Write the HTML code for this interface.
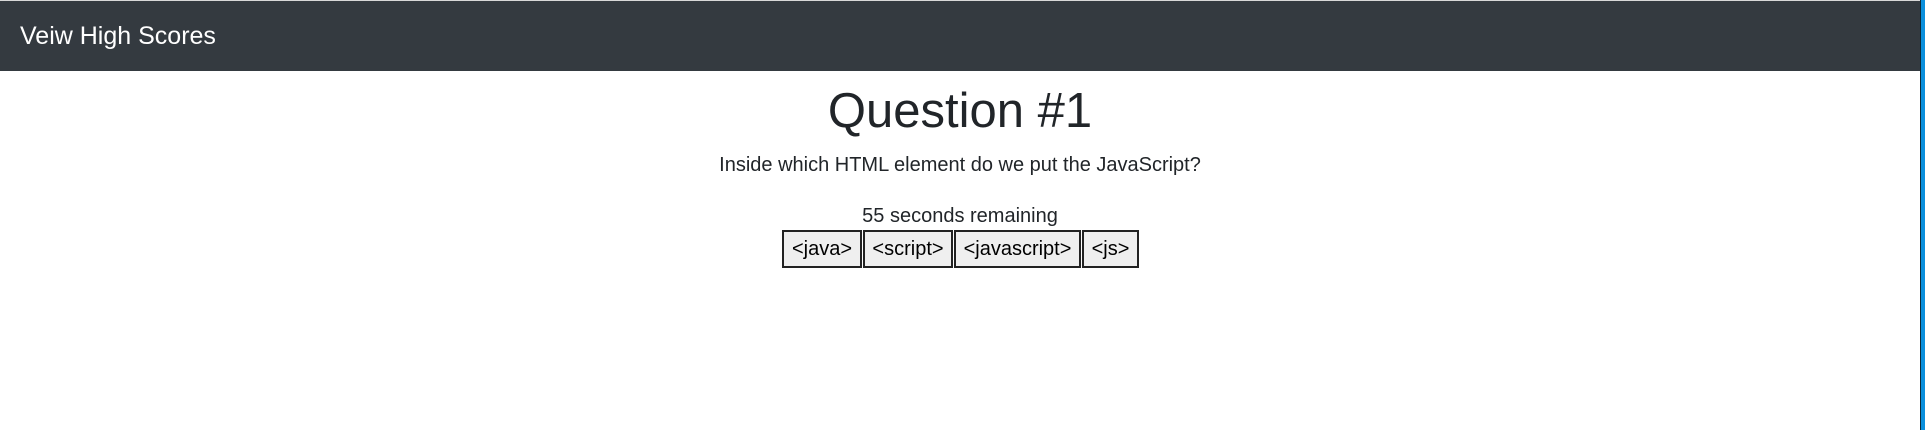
<!DOCTYPE html>
<html><head><style>
body{margin:0;width:1925px;height:430px;background:#fff;font-family:"Liberation Sans",Arial,sans-serif;color:#212529;position:relative;overflow:hidden}
.nav{position:absolute;left:0;top:1px;width:1920px;height:70px;background:#343a40}
.topline{position:absolute;left:0;top:0;width:1920px;height:1px;background:#d8d8d8}
.nav span{position:absolute;left:20px;top:21px;font-size:25px;color:#fff;line-height:28px}
.edge1{position:absolute;left:1920px;top:0;width:1px;height:430px;background:#0a2a3a}
.edge2{position:absolute;left:1921px;top:0;width:4px;height:430px;background:#0a8fdc}
.t{position:absolute;left:0;width:1920px;text-align:center;white-space:nowrap}
.btns{position:absolute;left:782px;top:230px;display:flex;gap:1px}
.btns div{border:2px solid #222;background:#efefef;font-size:20px;line-height:34px;text-align:center;color:#000;box-sizing:border-box;height:38px}
</style></head><body>
<div class="topline"></div>
<div class="nav"><span>Veiw High Scores</span></div>
<div class="edge1"></div><div class="edge2"></div>
<div class="t" style="top:81px;font-size:49px;line-height:60px;">Question #1</div>
<div class="t" style="top:153px;font-size:20px;line-height:24px;">Inside which HTML element do we put the JavaScript?</div>
<div class="t" style="top:204px;font-size:20px;line-height:24px;">55 seconds remaining</div>
<div class="btns">
<div style="width:80px">&lt;java&gt;</div>
<div style="width:90px">&lt;script&gt;</div>
<div style="width:127px">&lt;javascript&gt;</div>
<div style="width:57px">&lt;js&gt;</div>
</div>
</body></html>
